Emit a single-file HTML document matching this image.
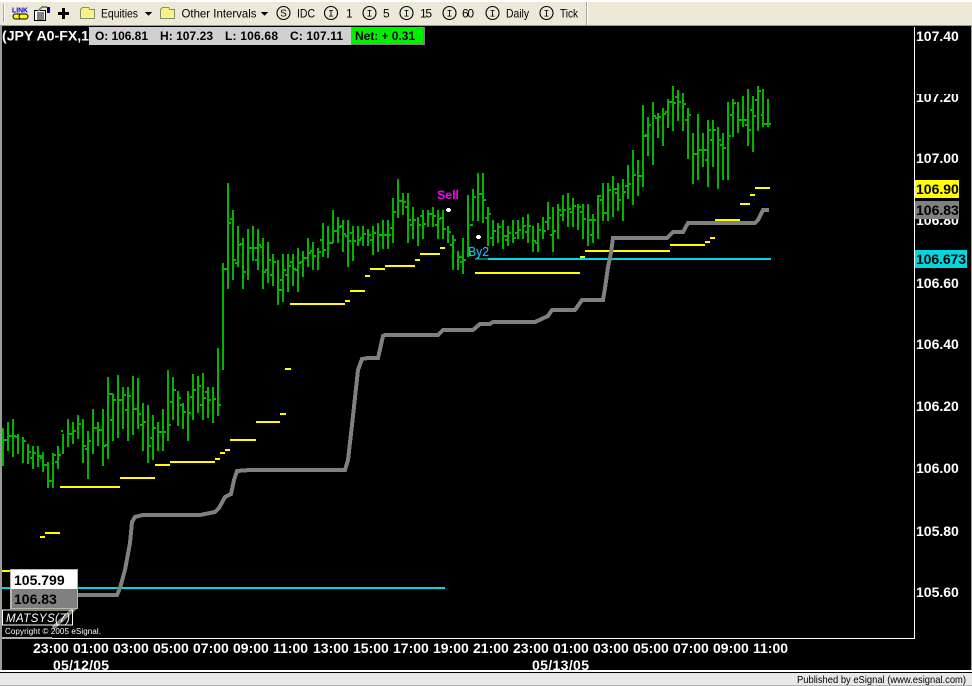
<!DOCTYPE html>
<html><head><meta charset="utf-8"><title>Chart</title>
<style>
html,body{margin:0;padding:0;background:#000;width:972px;height:686px;overflow:hidden}
svg{display:block}
text{font-family:"Liberation Sans",sans-serif}
.a{font-weight:bold;font-size:14px;fill:#fff}
.t{font-size:12px;fill:#000}
.h{font-weight:bold;font-size:12px;fill:#000}
</style></head><body>
<svg width="972" height="686" viewBox="0 0 972 686" xmlns="http://www.w3.org/2000/svg">
<rect width="972" height="686" fill="#000"/>
<!-- toolbar -->
<rect width="972" height="25" fill="#ece9d8"/>
<rect width="972" height="2" y="0" fill="#fff"/>
<rect y="25" width="972" height="1" fill="#9d9a8a"/>
<g shape-rendering="crispEdges">
<rect x="3" y="4" width="1" height="18" fill="#aca899"/><rect x="4" y="4" width="1" height="18" fill="#fff"/>
<rect x="586" y="2" width="1" height="23" fill="#aca899"/><rect x="587" y="2" width="1" height="23" fill="#fff"/>
</g>
<!-- link icon -->
<text x="12" y="12.500" font-size="7.500" font-weight="bold" fill="#0000d0" textLength="16" lengthAdjust="spacingAndGlyphs">LINK</text>
<rect x="13" y="14" width="9" height="5" rx="2.500" fill="#ffff00" stroke="#000" stroke-width="1"/>
<rect x="19" y="14" width="9" height="5" rx="2.500" fill="#ffff00" stroke="#000" stroke-width="1"/>
<!-- doc icon -->
<g shape-rendering="crispEdges">
<rect x="34.500" y="10.500" width="11" height="10" fill="#fff" stroke="#000"/>
<path d="M37 13h7M37 15h7M37 17h7M37 19h7" stroke="#000" stroke-width="1"/>
<rect x="47" y="7" width="3" height="6" fill="#000080"/>
<path d="M38 11l4-4h5" stroke="#808080" stroke-width="2" fill="none"/>
<!-- plus -->
<rect x="62" y="8" width="3" height="11" fill="#000"/>
<rect x="58" y="12" width="11" height="3" fill="#000"/>
<!-- folders -->
<path d="M80.500 18.500V9.500L82.500 7.500H88.500L90 9.500H94.500V18.500Z" fill="#f8f488" stroke="#8a8a70"/>
<path d="M160.500 18.500V9.500L162.500 7.500H168.500L170 9.500H174.500V18.500Z" fill="#f8f488" stroke="#8a8a70"/>
<path d="M145 12h7l-3.500 4z" fill="#000"/>
<path d="M261 12h7l-3.500 4z" fill="#000"/>
</g>
<text class="t" x="101" y="17.500" textLength="37" lengthAdjust="spacingAndGlyphs">Equities</text>
<text class="t" x="181.500" y="17.500" textLength="75" lengthAdjust="spacingAndGlyphs">Other Intervals</text>
<g fill="none" stroke="#000" stroke-width="1.100">
<circle cx="283.500" cy="13" r="6.500"/><circle cx="331" cy="13" r="6.500"/><circle cx="369.500" cy="13" r="6.500"/><circle cx="406.500" cy="13" r="6.500"/><circle cx="449.500" cy="13" r="6.500"/><circle cx="492.500" cy="13" r="6.500"/><circle cx="546.500" cy="13" r="6.500"/>
</g>
<text x="283.500" y="16.500" font-size="10" text-anchor="middle" fill="#000">S</text>
<g font-size="10" text-anchor="middle" fill="#000" style="font-family:'Liberation Mono',monospace">
<text style="font-family:'Liberation Mono',monospace" x="331" y="16.500">I</text><text style="font-family:'Liberation Mono',monospace" x="369.500" y="16.500">I</text><text style="font-family:'Liberation Mono',monospace" x="406.500" y="16.500">I</text><text style="font-family:'Liberation Mono',monospace" x="449.500" y="16.500">I</text><text style="font-family:'Liberation Mono',monospace" x="492.500" y="16.500">I</text><text style="font-family:'Liberation Mono',monospace" x="546.500" y="16.500">I</text>
</g>
<text class="t" x="297" y="17.500" textLength="18" lengthAdjust="spacingAndGlyphs">IDC</text>
<text class="t" x="346" y="17.500">1</text>
<text class="t" x="383" y="17.500">5</text>
<text class="t" x="420" y="17.500" textLength="12">15</text>
<text class="t" x="462" y="17.500" textLength="12">60</text>
<text class="t" x="506" y="17.500" textLength="23" lengthAdjust="spacingAndGlyphs">Daily</text>
<text class="t" x="560" y="17.500" textLength="18" lengthAdjust="spacingAndGlyphs">Tick</text>

<!-- frame -->
<g shape-rendering="crispEdges">
<rect x="0" y="26" width="2" height="646" fill="#9a9a9a"/>
<rect x="2" y="638" width="913" height="1" fill="#fff"/>
<rect x="914" y="27" width="1" height="612" fill="#fff"/>
<rect x="0" y="673" width="972" height="13" fill="#e8e8e8"/>
<rect x="0" y="685" width="972" height="1" fill="#b0b0b0"/>
<rect x="971" y="26" width="1" height="646" fill="#9a9a9a"/>
</g>

<!-- price bars -->
<g shape-rendering="crispEdges" fill="none">
<path stroke="#00b400" stroke-width="2" d="M3 428V466M3 440h5M8 422V451M8 436h5M13 419V457M13 436h3M18 434V454M18 437h-3M23 437V463M23 441h3M28 444V464M28 452h3M33 446V469M33 453h3M38 446V467M38 456h4M43 452V472M43 465h5M48 462V488M48 481h5M53 453V488M53 455h3M58 446V469M58 455h3M63 434V454M63 431h-2M68 419V447M68 434h5M73 422V444M73 431h3M78 415V439M78 424h3M83 419V463M83 446h3M88 431V479M88 441h3M93 409V454M93 428h5M98 422V446M98 430h5M103 409V466M103 446h3M108 377V459M108 394h5M113 394V441M113 400h3M118 375V438M118 400h3M123 387V429M123 395h3M128 387V441M128 396h3M133 376V435M133 409h5M138 378V429M138 414h3M143 403V451M143 422h3M148 405V463M148 446h3M153 415V460M153 428h3M158 422V451M158 432h5M163 409V451M163 432h3M168 370V441M168 425h3M173 377V420M173 390h3M178 391V426M178 398h3M183 403V429M183 412h3M188 391V441M188 413h3M193 374V420M193 390h3M198 376V413M198 386h3M203 373V420M203 398h3M208 387V418M208 400h3M213 387V423M213 399h3M218 348V416M218 405h3M223 263V370M223 269h5M228 183V289M228 223h3M233 210V280M233 260h3M238 226V267M238 245h3M243 238V289M243 272h3M248 229V280M248 248h5M253 226V261M253 248h5M258 229V270M258 245h3M263 238V289M263 272h3M268 242V283M268 260h3M273 254V286M273 262h3M278 260V305M278 290h5M283 254V302M283 270h3M288 254V292M288 266h3M293 254V286M293 269h3M298 248V292M298 263h3M303 251V277M303 258h3M308 238V267M308 253h3M313 242V270M313 256h3M318 248V270M318 252h3M323 223V257M323 250h3M328 226V258M328 243h5M333 210V243M333 231h5M338 217V243M338 227h3M343 220V252M343 234h3M348 220V267M348 241h3M353 226V261M353 241h3M358 226V246M358 240h3M363 226V246M363 234h3M368 229V246M368 235h3M373 226V255M373 233h3M378 223V252M378 235h5M383 220V249M383 235h5M388 220V249M388 235h3M393 198V243M393 212h3M398 179V218M398 201h5M403 193V215M403 202h3M408 193V243M408 220h3M413 207V239M413 220h3M418 217V246M418 225h3M423 210V239M423 224h3M428 210V227M428 214h5M433 207V227M433 216h3M438 210V239M438 219h3M443 210V239M443 229h3M448 226V243M448 232h3M453 235V270M453 240h3M458 251V270M458 257h5M463 238V274M463 260h3M468 195V257M468 254h3M473 189V221M473 197h3M478 173V221M478 194h5M483 173V223M483 200h3M488 207V246M488 214h3M493 220V246M493 231h3M498 223V243M498 227h3M503 220V249M503 236h5M508 226V246M508 233h3M513 220V243M513 238h3M518 220V239M518 230h3M523 217V239M523 226h3M528 214V243M528 226h3M533 226V252M533 241h3M538 223V252M538 230h3M543 217V239M543 231h3M548 202V230M548 218h3M553 207V252M553 231h3M558 204V239M558 210h3M563 195V221M563 210h3M568 193V227M568 209h3M573 198V227M573 206h3M578 204V230M578 207h3M583 204V239M583 219h3M588 204V246M588 220h5M593 214V243M593 220h3M598 195V239M598 196h3M603 183V221M603 213h5M608 183V221M608 190h3M613 176V217M613 189h5M618 183V211M618 200h3M623 179V221M623 192h3M628 165V199M628 184h3M633 150V205M633 175h3M638 160V196M638 176h5M643 105V187M643 136h5M648 117V156M648 125h3M653 102V165M653 116h3M658 113V138M658 117h3M663 108V146M663 114h3M668 99V128M668 102h5M673 86V131M673 103h3M678 90V121M678 102h3M683 93V131M683 104h3M688 108V159M688 115h3M693 133V184M693 154h5M698 114V180M698 150h5M703 133V167M703 150h5M708 120V187M708 130h3M713 120V167M713 130h3M718 127V189M718 140h3M723 133V180M723 148h3M728 102V180M728 136h3M733 99V137M733 103h3M738 102V133M738 120h5M743 96V127M743 120h5M748 89V146M748 130h3M753 96V152M753 116h3M758 86V131M758 91h3M763 89V127M763 115h-2M768 99V127M763 124h8"/>
<!-- left ticks -->
<path stroke="#00b400" stroke-width="2" d="M33 458h-3M43 458h-3M58 462h-3M88 449h-3M108 445h-3M113 420h-3M123 400h-3M128 410h-3M143 425h-3M153 438h-3M173 402h-3M183 405h-3M193 397h-3M203 405h-3M208 392h-3M233 219h-3M238 263h-3M243 244h-3M258 260h-3M263 247h-3M268 270h-3M273 275h-3M283 280h-3M288 275h-3M293 262h-3M298 270h-3M303 262h-3M308 258h-3M313 251h-3M323 240h-3M343 226h-3M348 236h-3M353 233h-3M363 238h-3M373 240h-3M393 228h-3M408 207h-3M413 225h-3M423 216h-3M438 225h-3M443 218h-3M453 245h-3M463 262h-3M473 225h-3M488 218h-3M493 238h-3M508 240h-3M518 233h-3M528 232h-3M538 243h-3M548 222h-3M553 235h-3M563 215h-3M573 212h-3M583 212h-3M593 235h-3M603 200h-3M618 193h-3M628 186h-3M648 135h-3M658 118h-3M668 112h-3M678 97h-3M688 120h-3M708 160h-3M713 140h-3M723 145h-3M733 115h-3M748 125h-3M753 110h-3M758 100h-3"/>
<!-- yellow -->
<path stroke="#ffff00" stroke-width="2" d="M2 571H10M40 537H45M45 533H60M60 487H120M120 478H155M155 465H170M170 462H215M215 459H220M220 453H225M225 450H230M230 440H256M256 422H280M280 414H286M285 369H291M290 304H345M345 301H350M350 291H365M365 276H370M370 269H385M385 266H415M415 260H420M420 254H440M440 248H445M475 273H580M580 257H585M585 251H670M670 245H705M705 242H710M710 238H715M715 220H740M740 204H750M750 195H755M755 188H770"/>
<!-- cyan -->
<path stroke="#00d8e0" stroke-width="2" d="M2 588H445M488 259H771"/>
<path stroke="#00d8e0" stroke-width="1" d="M475 259H488"/>
<!-- gray MA -->
<path stroke="#808080" stroke-width="4" d="M53 628L75 608V595H117L120 588L125 570L130 543L132 522L135 517L143 515H200L215 512L219 508L225 497L231 494L234 480L237 471L250 470H345L348 460L352 425L358 370L362 359L368 358H378L383 336L385 335H438L443 330H473L480 324H490L493 322H535L548 316L552 310H575L582 300H603L605 288L608 267L611 253L613 238H667L673 232H683L688 223H755L758 220L763 210H769"/>
<!-- markers -->
<path fill="#fff" d="M447 208h3v1h1v2h-1v1h-3v-1h-1v-2h1zM477 235h3v1h1v2h-1v1h-3v-1h-1v-2h1z"/>
</g>
<text x="437" y="199" font-size="12" font-weight="bold" fill="#ff00ff" textLength="22" lengthAdjust="spacingAndGlyphs">Sell</text>
<text x="468" y="256" font-size="12.500" fill="#18b4f0" stroke="#18b4f0" stroke-width=".2" textLength="21" lengthAdjust="spacingAndGlyphs">By2</text>

<!-- header -->
<rect x="2" y="27" width="88" height="18" fill="#000"/>
<text x="2" y="40.500" font-size="14" font-weight="bold" fill="#fff" textLength="87" lengthAdjust="spacingAndGlyphs">(JPY A0-FX,1</text>
<g shape-rendering="crispEdges">
<rect x="89" y="27" width="263" height="18" fill="#d0d0d0"/>
<rect x="351" y="27" width="74" height="18" fill="#808080"/>
<rect x="351" y="27" width="72" height="17" fill="#00f000"/>
</g>
<text class="h" x="95" y="40" textLength="53">O: 106.81</text>
<text class="h" x="160" y="40" textLength="53">H: 107.23</text>
<text class="h" x="225" y="40" textLength="53">L: 106.68</text>
<text class="h" x="290" y="40" textLength="53">C: 107.11</text>
<text class="h" x="355" y="40" textLength="60">Net: + 0.31</text>

<!-- right axis -->
<text class="a" x="916" y="41">107.40</text>
<text class="a" x="916" y="102">107.20</text>
<rect x="915" y="80" width="55" height="14" fill="#000"/>
<text class="a" x="916" y="163">107.00</text>
<text class="a" x="916" y="225">106.80</text>
<text class="a" x="916" y="288">106.60</text>
<text class="a" x="916" y="349">106.40</text>
<text class="a" x="916" y="411">106.20</text>
<text class="a" x="916" y="473">106.00</text>
<text class="a" x="916" y="536">105.80</text>
<text class="a" x="916" y="597">105.60</text>
<g shape-rendering="crispEdges">
<rect x="915" y="180" width="44" height="18" fill="#ffff00"/>
<rect x="915" y="201" width="44" height="18" fill="#808080"/>
<rect x="915" y="250" width="52" height="18" fill="#00d8e0"/>
</g>
<text x="916" y="194" font-size="14" font-weight="bold" fill="#000">106.90</text>
<text x="916" y="215" font-size="14" font-weight="bold" fill="#000">106.83</text>
<text x="916" y="264" font-size="14" font-weight="bold" fill="#000" textLength="50">106.673</text>

<!-- left tag -->
<g shape-rendering="crispEdges">
<rect x="10" y="569" width="68" height="40" fill="#b8b8a8"/>
<rect x="11" y="570" width="66" height="19" fill="#fff"/>
<rect x="12" y="589" width="65" height="19" fill="#808080"/>
<rect x="2" y="637" width="50" height="2" fill="#b0b0b0"/>
<rect x="2.500" y="610" width="70" height="15" fill="none" stroke="#fff"/>
</g>
<text x="14" y="585" font-size="14" font-weight="bold" fill="#000">105.799</text>
<text x="14" y="604" font-size="14" font-weight="bold" fill="#000">106.83</text>
<text x="6" y="622" font-size="11.500" font-style="italic" fill="#fff" textLength="64" lengthAdjust="spacing">MATSYS(7)</text>
<text x="5" y="634" font-size="8" fill="#fff" textLength="96" lengthAdjust="spacing">Copyright © 2005 eSignal.</text>

<!-- time axis -->
<g class="a">
<text class="a" x="33" y="653">23:00</text>
<text class="a" x="73" y="653">01:00</text>
<text class="a" x="113" y="653">03:00</text>
<text class="a" x="153" y="653">05:00</text>
<text class="a" x="193" y="653">07:00</text>
<text class="a" x="233" y="653">09:00</text>
<text class="a" x="273" y="653">11:00</text>
<text class="a" x="313" y="653">13:00</text>
<text class="a" x="353" y="653">15:00</text>
<text class="a" x="393" y="653">17:00</text>
<text class="a" x="433" y="653">19:00</text>
<text class="a" x="473" y="653">21:00</text>
<text class="a" x="513" y="653">23:00</text>
<text class="a" x="553" y="653">01:00</text>
<text class="a" x="593" y="653">03:00</text>
<text class="a" x="633" y="653">05:00</text>
<text class="a" x="673" y="653">07:00</text>
<text class="a" x="713" y="653">09:00</text>
<text class="a" x="753" y="653">11:00</text>
</g>
<text class="a" x="53" y="670" textLength="56">05/12/05</text>
<text class="a" x="532" y="670" textLength="57">05/13/05</text>
<rect x="0" y="670" width="972" height="2" fill="#fff" shape-rendering="crispEdges"/>
<rect x="0" y="672" width="972" height="1" fill="#000" shape-rendering="crispEdges"/>
<text x="797" y="683" font-size="10.500" fill="#000" textLength="169" lengthAdjust="spacingAndGlyphs">Published by eSignal (www.esignal.com)</text>
</svg>
</body></html>
